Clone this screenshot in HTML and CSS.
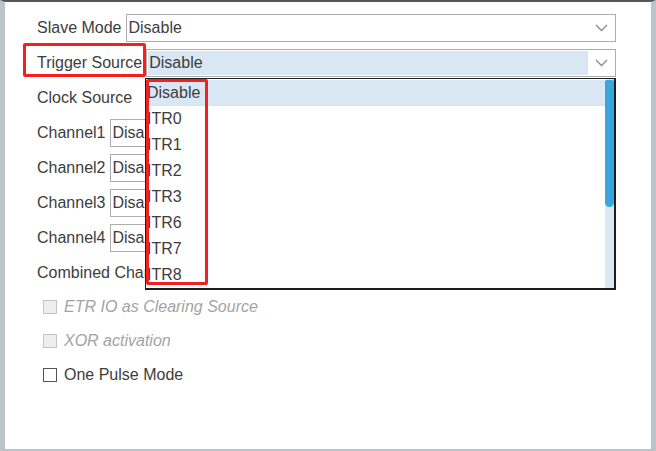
FILE: index.html
```html
<!DOCTYPE html>
<html>
<head>
<meta charset="utf-8">
<link rel="stylesheet" href="styles.css">
</head>
<body>
<div class="window">
  <div class="form">
    <div class="row">
      <span class="label">Slave Mode</span>
      <div class="select wide">
        <span class="value">Disable</span>
        <span class="arrow"><svg width="13" height="8" viewBox="0 0 13 8"><polyline points="1,1 6.5,6.5 12,1" fill="none" stroke="#8a8a8a" stroke-width="1.3"/></svg></span>
      </div>
    </div>
    <div class="row">
      <span class="label trig">Trigger Source</span>
      <div class="select wide focused">
        <span class="value">Disable</span>
        <span class="arrow"><svg width="13" height="8" viewBox="0 0 13 8"><polyline points="1,1 6.5,6.5 12,1" fill="none" stroke="#8a8a8a" stroke-width="1.3"/></svg></span>
      </div>
    </div>
    <div class="row"><span class="label">Clock Source</span></div>
    <div class="row"><span class="label">Channel1</span><div class="select short"><span class="value">Disable</span></div></div>
    <div class="row"><span class="label">Channel2</span><div class="select short"><span class="value">Disable</span></div></div>
    <div class="row"><span class="label">Channel3</span><div class="select short"><span class="value">Disable</span></div></div>
    <div class="row"><span class="label">Channel4</span><div class="select short"><span class="value">Disable</span></div></div>
    <div class="row"><span class="label clipped">Combined Channels</span></div>
    <div class="checks">
      <div class="check disabled"><span class="box"></span><span class="ctext">ETR IO as Clearing Source</span></div>
      <div class="check disabled"><span class="box"></span><span class="ctext">XOR activation</span></div>
      <div class="check"><span class="box"></span><span class="ctext">One Pulse Mode</span></div>
    </div>
  </div>

  <div class="dropdown">
    <ul class="items">
      <li class="item selected">Disable</li>
      <li class="item">ITR0</li>
      <li class="item">ITR1</li>
      <li class="item">ITR2</li>
      <li class="item">ITR3</li>
      <li class="item">ITR6</li>
      <li class="item">ITR7</li>
      <li class="item">ITR8</li>
    </ul>
    <div class="scrollbar"><div class="thumb"></div></div>
  </div>

  <div class="annot annot-label"></div>
  <div class="annot annot-list"></div>
</div>
</body>
</html>
```
FILE: styles.css
```css
* { box-sizing: border-box; }
html, body { margin: 0; padding: 0; background: #ffffff; }
body {
  font-family: "Liberation Sans", Arial, sans-serif;
  font-size: 16px;
  color: #3d3d3d;
}
.window {
  position: relative;
  width: 656px;
  height: 451px;
  background: #ffffff;
  border-left: 5px solid #bac4ca;
  border-right: 5px solid #bac4ca;
  border-top: 2px solid #575757;
  border-bottom: 2px solid #bac4ca;
  overflow: hidden;
}
.form {
  display: flex;
  flex-direction: column;
  gap: 7px;
  padding: 12px 35px 0 32px;
}
.row {
  display: flex;
  align-items: center;
  height: 28px;
  gap: 4px;
}
.label { flex: none; white-space: nowrap; }
.label.clipped { width: 108px; overflow: hidden; }
.select {
  display: flex;
  align-items: stretch;
  height: 28px;
  border: 1px solid #adadad;
  background: #ffffff;
}
.select.wide { flex: 1; }
.select.short { width: 37px; flex: none; overflow: hidden; }
.select .value {
  flex: 1;
  display: flex;
  align-items: center;
  padding-left: 2px;
  white-space: nowrap;
  overflow: hidden;
}
.select.focused .value {
  background: #d9e7f4;
  margin: 1px 0 1px 1px;
  padding-left: 1px;
}
.select .arrow {
  flex: none;
  width: 27px;
  display: flex;
  align-items: center;
  justify-content: center;
}
.checks {
  display: flex;
  flex-direction: column;
  gap: 6px;
  margin-top: -1px;
}
.check {
  display: flex;
  align-items: center;
  height: 28px;
  padding-left: 6px;
  gap: 7px;
}
.check .box {
  width: 14px;
  height: 14px;
  border: 1px solid #555555;
  background: #ffffff;
}
.check.disabled .box {
  border-color: #c4c4c4;
  background: #eeeeee;
}
.check.disabled .ctext {
  color: #a3a3a3;
  font-style: italic;
}

.dropdown {
  position: absolute;
  left: 140px;
  top: 76px;
  width: 471px;
  height: 212px;
  background: #ffffff;
  border: 1px solid #1e1e1e;
  border-right-width: 2px;
  border-bottom-width: 2px;
  display: flex;
}
.items {
  list-style: none;
  margin: 0;
  padding: 1px 0 0 0;
  flex: 1;
}
.item {
  height: 26px;
  line-height: 26px;
  padding-left: 1px;
}
.item.selected { background: #d9e7f4; }
.scrollbar {
  width: 9px;
  flex: none;
  background: #dbe8f5;
  padding-top: 1px;
}
.thumb {
  height: 127px;
  background: #3aa6db;
  border-radius: 2px 2px 5px 5px;
}

.annot {
  position: absolute;
  border: 3px solid #f41f1f;
  border-radius: 2px;
}
.annot-label { left: 18px; top: 41px; width: 123px; height: 34px; }
.annot-list { left: 141px; top: 77px; width: 62px; height: 206px; }
```
